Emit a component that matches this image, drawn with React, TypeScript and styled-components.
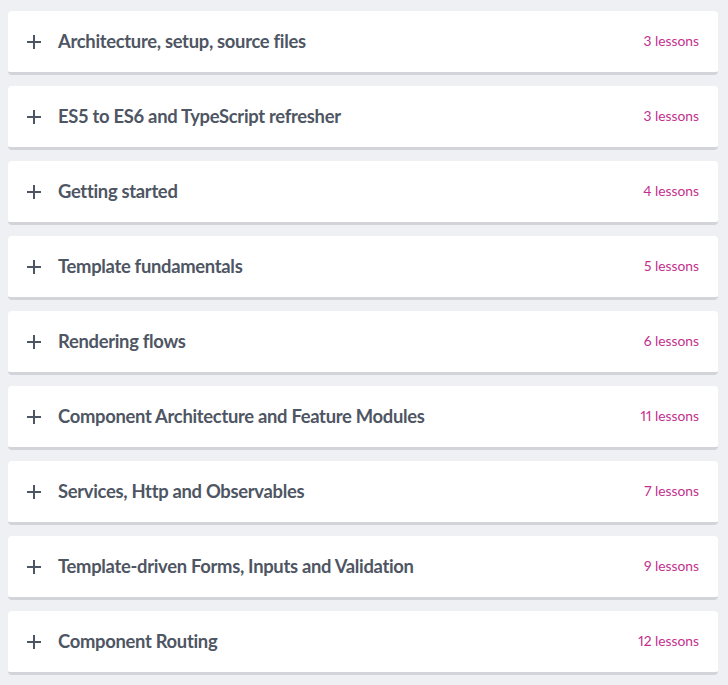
import React from "react";
import styled, { createGlobalStyle } from "styled-components";

const GlobalStyle = createGlobalStyle`
  html, body {
    margin: 0;
    padding: 0;
    background: #eff0f4;
  }
  body {
    font-family: "Lato", "Noto Sans", sans-serif;
  }
`;

const List = styled.div`
  display: flex;
  flex-direction: column;
  gap: 11px;
  padding: 11px 10px 9px 8px;
`;

const Card = styled.div`
  box-sizing: border-box;
  display: flex;
  align-items: center;
  height: 64px;
  padding: 0 19px 2px;
  background: #ffffff;
  border-radius: 4px;
  border-bottom: 3px solid #d2d4da;
  cursor: pointer;
`;

const PlusIcon = styled.svg`
  width: 14px;
  height: 14px;
  flex: none;
  margin-top: 2px;
`;

const Title = styled.div`
  flex: 1;
  margin-left: 17px;
  font-size: 18.4px;
  font-weight: 700;
  color: #4e5563;
  letter-spacing: -0.3px;
`;

const Count = styled.div`
  font-size: 13.8px;
  color: #c2308d;
  font-variant-numeric: proportional-nums;
`;

const sections: [string, number][] = [
  ["Architecture, setup, source files", 3],
  ["ES5 to ES6 and TypeScript refresher", 3],
  ["Getting started", 4],
  ["Template fundamentals", 5],
  ["Rendering flows", 6],
  ["Component Architecture and Feature Modules", 11],
  ["Services, Http and Observables", 7],
  ["Template-driven Forms, Inputs and Validation", 9],
  ["Component Routing", 12],
];

export default function App() {
  return (
    <>
      <GlobalStyle />
      <List>
        {sections.map(([title, n]) => (
          <Card key={title}>
            <PlusIcon viewBox="0 0 14 14">
              <path d="M7 0v14M0 7h14" stroke="#4e5563" strokeWidth="2" />
            </PlusIcon>
            <Title>{title}</Title>
            <Count>{n} lessons</Count>
          </Card>
        ))}
      </List>
    </>
  );
}
